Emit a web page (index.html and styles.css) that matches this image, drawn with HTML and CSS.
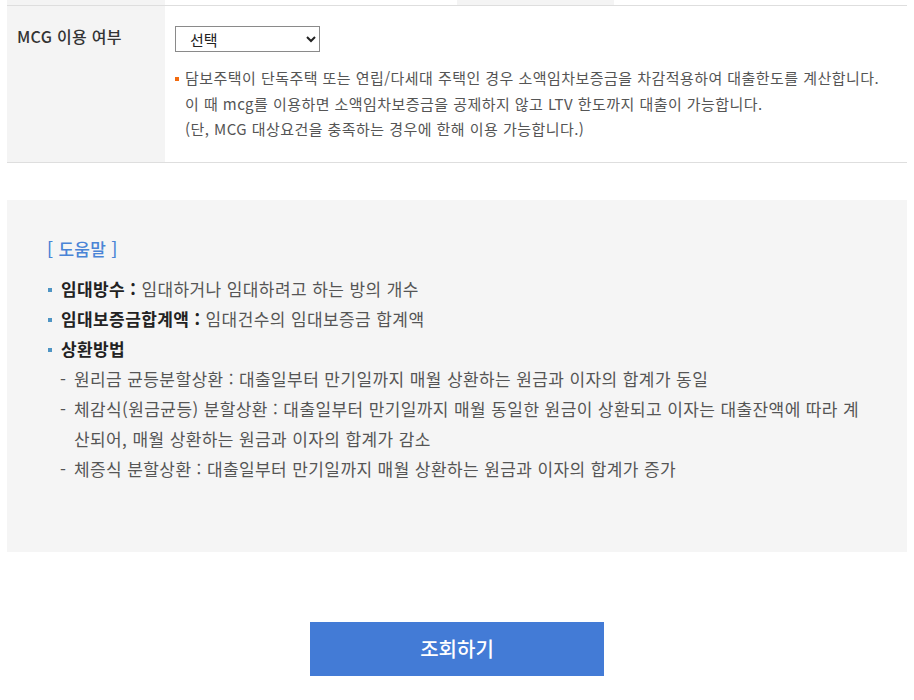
FILE: index.html
```html
<!DOCTYPE html>
<html lang="ko">
<head>
<meta charset="utf-8">
<title>MCG 이용 여부</title>
<link rel="stylesheet" href="styles.css">
</head>
<body>
<div class="page">
  <table class="form-table">
    <colgroup>
      <col class="c-th1"><col class="c-td1"><col class="c-th2"><col class="c-td2">
    </colgroup>
    <tr class="prev-row">
      <th></th><td></td><th></th><td></td>
    </tr>
    <tr class="mcg-row">
      <th class="label">MCG 이용 여부</th>
      <td colspan="3" class="field">
        <select class="sel">
          <option>선택</option>
          <option>이용</option>
          <option>미이용</option>
        </select>
        <div class="desc">
          <p class="desc-first"><span class="obullet"></span>담보주택이 단독주택 또는 연립/다세대 주택인 경우 소액임차보증금을 차감적용하여 대출한도를 계산합니다.</p>
          <p>이 때 mcg를 이용하면 소액임차보증금을 공제하지 않고 LTV 한도까지 대출이 가능합니다.</p>
          <p>(단, MCG 대상요건을 충족하는 경우에 한해 이용 가능합니다.)</p>
        </div>
      </td>
    </tr>
  </table>

  <div class="help">
    <h3 class="help-title">[ 도움말 ]</h3>
    <ul class="help-list">
      <li><strong>임대방수 :</strong> 임대하거나 임대하려고 하는 방의 개수</li>
      <li><strong>임대보증금합계액 :</strong> 임대건수의 임대보증금 합계액</li>
      <li><strong>상환방법</strong>
        <ul class="sub-list">
          <li>원리금 균등분할상환 : 대출일부터 만기일까지 매월 상환하는 원금과 이자의 합계가 동일</li>
          <li>체감식(원금균등) 분할상환 : 대출일부터 만기일까지 매월 동일한 원금이 상환되고 이자는 대출잔액에 따라 계산되어, 매월 상환하는 원금과 이자의 합계가 감소</li>
          <li>체증식 분할상환 : 대출일부터 만기일까지 매월 상환하는 원금과 이자의 합계가 증가</li>
        </ul>
      </li>
    </ul>
  </div>

  <div class="btn-area">
    <button type="button" class="btn-search">조회하기</button>
  </div>
</div>
</body>
</html>
```

FILE: styles.css
```css
html, body {
  margin: 0;
  padding: 0;
  background: #fff;
}
body {
  font-family: "Noto Sans CJK KR", "Noto Sans", sans-serif;
  color: #555;
}
.page {
  width: 900px;
  padding: 0 7px;
}
.form-table {
  width: 900px;
  border-collapse: collapse;
  table-layout: fixed;
}
.c-th1 { width: 158px; }
.c-td1 { width: 292px; }
.c-th2 { width: 157px; }
.c-td2 { width: 293px; }
.form-table th,
.form-table td {
  border-bottom: 1px solid #dedede;
  padding: 0;
  text-align: left;
  vertical-align: top;
}
.form-table th {
  background: #f4f4f4;
}
.prev-row th,
.prev-row td {
  height: 5px;
}
.label {
  font-size: 16px;
  font-weight: 500;
  letter-spacing: 0.3px;
  color: #333;
  padding: 19px 0 0 10px !important;
  line-height: 22px;
}
.field {
  padding: 20px 0 20px 10px !important;
}
.sel {
  display: block;
  width: 145px;
  height: 26px;
  font-family: "Noto Sans CJK KR", sans-serif;
  font-size: 15px;
  color: #222;
  border: 1px solid #8a8a8a;
  border-radius: 0;
  background: #fff;
  padding: 0 0 0 10px;
}
.desc {
  margin-top: 13px;
  font-size: 15px;
  letter-spacing: 0.45px;
  line-height: 25.5px;
  color: #555;
}
.desc p {
  margin: 0;
  padding-left: 10px;
}
.desc-first {
  position: relative;
}
.obullet {
  position: absolute;
  left: 0;
  top: 12px;
  width: 4px;
  height: 4px;
  background: #f26b10;
}

.help {
  margin-top: 37px;
  background: #f5f5f5;
  padding: 36px 40px 68px 40px;
}
.help-title {
  margin: 0 0 12px 0;
  font-size: 17px;
  font-weight: 500;
  letter-spacing: 0.3px;
  color: #4a84d6;
  line-height: 26px;
}
.help-list,
.sub-list {
  list-style: none;
  margin: 0;
  padding: 0;
}
.help-list > li {
  position: relative;
  padding-left: 14px;
  font-size: 17px;
  letter-spacing: 0.4px;
  line-height: 30px;
  color: #555;
}
.help-list > li::before {
  content: "";
  position: absolute;
  left: 1px;
  top: 14px;
  width: 4px;
  height: 4px;
  background: #4f95c4;
}
.help-list strong {
  color: #222;
  font-weight: 700;
}
.sub-list > li {
  position: relative;
  padding-left: 14px;
  margin-left: -1px;
}
.sub-list > li::before {
  content: "-";
  position: absolute;
  left: 0;
  top: 0;
}

.btn-area {
  display: flex;
  justify-content: center;
  margin-top: 70px;
}
.btn-search {
  width: 294px;
  height: 54px;
  border: 0;
  background: #437bd6;
  color: #fff;
  font-family: "Noto Sans CJK KR", sans-serif;
  font-size: 20px;
  font-weight: 500;
  cursor: pointer;
}
```
